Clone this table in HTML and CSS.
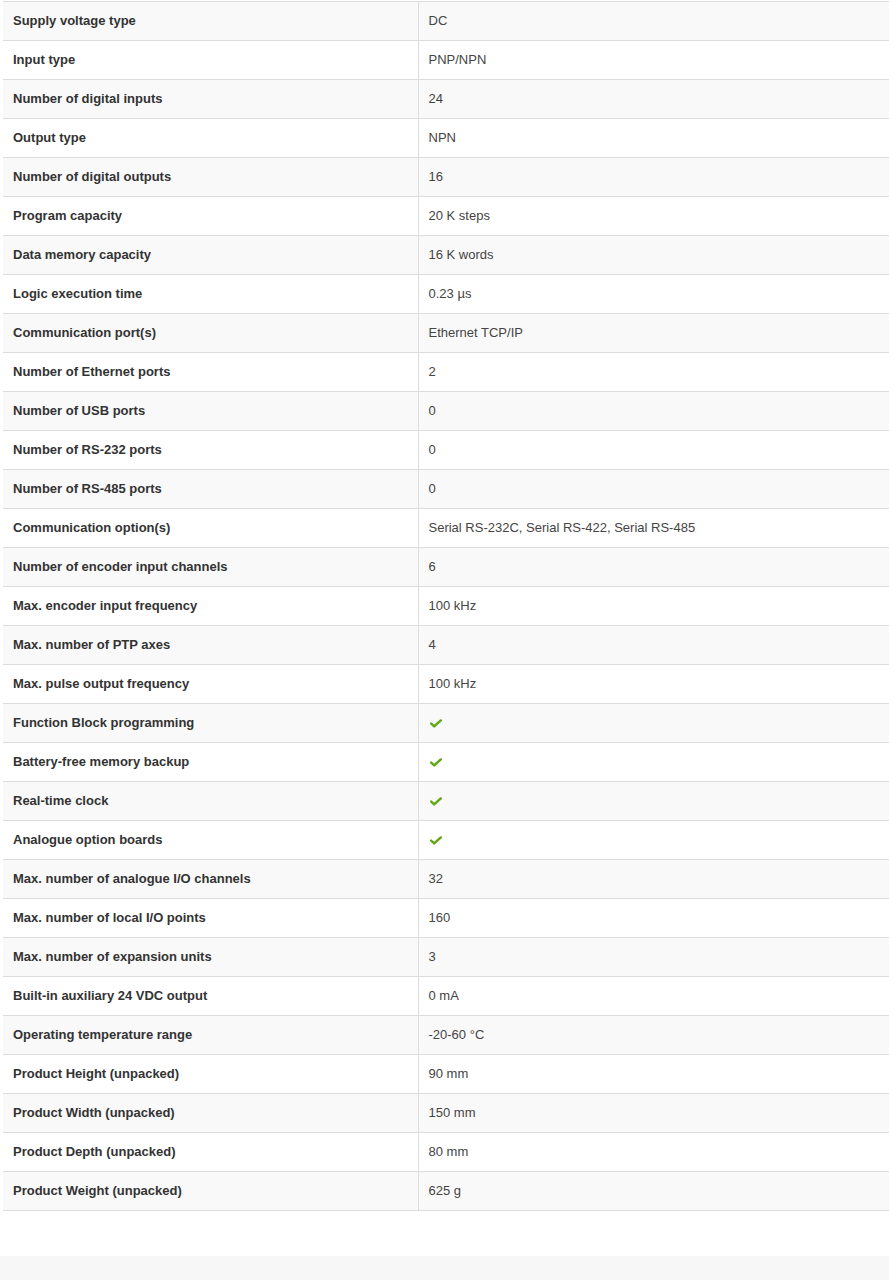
FILE: index.html
```html
<!DOCTYPE html>
<html lang="en">
<head>
<meta charset="utf-8">
<title>Specifications</title>
<link rel="stylesheet" href="styles.css">
</head>
<body>
<div class="wrap">
<table class="specs">
<tbody>
<tr><th>Supply voltage type</th><td>DC</td></tr>
<tr><th>Input type</th><td>PNP/NPN</td></tr>
<tr><th>Number of digital inputs</th><td>24</td></tr>
<tr><th>Output type</th><td>NPN</td></tr>
<tr><th>Number of digital outputs</th><td>16</td></tr>
<tr><th>Program capacity</th><td>20 K steps</td></tr>
<tr><th>Data memory capacity</th><td>16 K words</td></tr>
<tr><th>Logic execution time</th><td>0.23 µs</td></tr>
<tr><th>Communication port(s)</th><td>Ethernet TCP/IP</td></tr>
<tr><th>Number of Ethernet ports</th><td>2</td></tr>
<tr><th>Number of USB ports</th><td>0</td></tr>
<tr><th>Number of RS-232 ports</th><td>0</td></tr>
<tr><th>Number of RS-485 ports</th><td>0</td></tr>
<tr><th>Communication option(s)</th><td>Serial RS-232C, Serial RS-422, Serial RS-485</td></tr>
<tr><th>Number of encoder input channels</th><td>6</td></tr>
<tr><th>Max. encoder input frequency</th><td>100 kHz</td></tr>
<tr><th>Max. number of PTP axes</th><td>4</td></tr>
<tr><th>Max. pulse output frequency</th><td>100 kHz</td></tr>
<tr><th>Function Block programming</th><td><svg class="check" viewBox="0 0 12 9" width="12" height="9"><path d="M1.2 4.6 L4.2 7.4 L10.8 1.4" fill="none" stroke="#5ea814" stroke-width="2.4" stroke-linecap="round" stroke-linejoin="round"/></svg></td></tr>
<tr><th>Battery-free memory backup</th><td><svg class="check" viewBox="0 0 12 9" width="12" height="9"><path d="M1.2 4.6 L4.2 7.4 L10.8 1.4" fill="none" stroke="#5ea814" stroke-width="2.4" stroke-linecap="round" stroke-linejoin="round"/></svg></td></tr>
<tr><th>Real-time clock</th><td><svg class="check" viewBox="0 0 12 9" width="12" height="9"><path d="M1.2 4.6 L4.2 7.4 L10.8 1.4" fill="none" stroke="#5ea814" stroke-width="2.4" stroke-linecap="round" stroke-linejoin="round"/></svg></td></tr>
<tr><th>Analogue option boards</th><td><svg class="check" viewBox="0 0 12 9" width="12" height="9"><path d="M1.2 4.6 L4.2 7.4 L10.8 1.4" fill="none" stroke="#5ea814" stroke-width="2.4" stroke-linecap="round" stroke-linejoin="round"/></svg></td></tr>
<tr><th>Max. number of analogue I/O channels</th><td>32</td></tr>
<tr><th>Max. number of local I/O points</th><td>160</td></tr>
<tr><th>Max. number of expansion units</th><td>3</td></tr>
<tr><th>Built-in auxiliary 24 VDC output</th><td>0 mA</td></tr>
<tr><th>Operating temperature range</th><td>-20-60 °C</td></tr>
<tr><th>Product Height (unpacked)</th><td>90 mm</td></tr>
<tr><th>Product Width (unpacked)</th><td>150 mm</td></tr>
<tr><th>Product Depth (unpacked)</th><td>80 mm</td></tr>
<tr><th>Product Weight (unpacked)</th><td>625 g</td></tr>
</tbody>
</table>
</div>
<div class="footer"></div>
</body>
</html>
```
FILE: styles.css
```css
html, body {
  margin: 0;
  padding: 0;
  background: #fff;
}
body {
  font-family: "Liberation Sans", Arial, sans-serif;
  font-size: 13px;
  color: #333;
  overflow: hidden;
}
.wrap {
  padding: 1px 0 0 3px;
  height: 1256px;
  box-sizing: border-box;
}
.specs {
  border-collapse: collapse;
  width: 890px;
  table-layout: fixed;
}
.specs th,
.specs td {
  height: 39px;
  padding: 0 10px;
  box-sizing: border-box;
  border-top: 1px solid #dddddd;
  border-bottom: 1px solid #dddddd;
  vertical-align: middle;
  text-align: left;
  line-height: 18px;
}
.specs th {
  width: 415px;
  font-weight: bold;
  color: #333;
}
.specs td {
  border-left: 1px solid #dddddd;
  color: #444;
  padding-left: 10px;
}
.specs tr:nth-child(odd) {
  background: #f9f9f9;
}
.check {
  display: block;
  margin-left: 1px;
}
.footer {
  height: 24px;
  background: #f7f7f7;
}
```
